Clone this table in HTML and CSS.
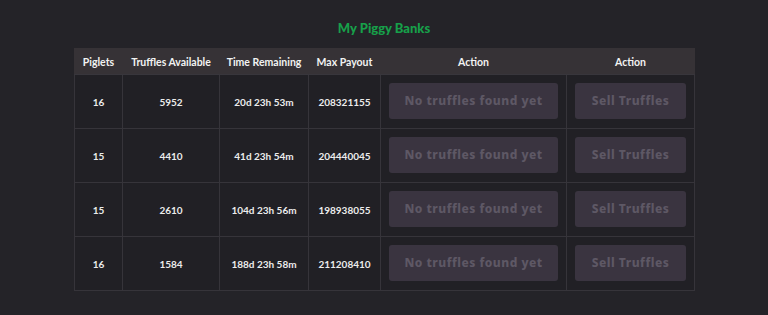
FILE: index.html
```html
<!DOCTYPE html>
<html>
<head>
<meta charset="utf-8">
<link rel="stylesheet" href="styles.css">
</head>
<body>
<h1 class="title">My Piggy Banks</h1>
<table class="banks">
  <colgroup>
    <col class="c1"><col class="c2"><col class="c3"><col class="c4"><col class="c5"><col class="c6">
  </colgroup>
  <thead>
    <tr><th>Piglets</th><th>Truffles Available</th><th>Time Remaining</th><th>Max Payout</th><th>Action</th><th>Action</th></tr>
  </thead>
  <tbody>
    <tr><td>16</td><td>5952</td><td>20d 23h 53m</td><td>208321155</td><td><button class="btn">No truffles found yet</button></td><td><button class="btn">Sell Truffles</button></td></tr>
    <tr><td>15</td><td>4410</td><td>41d 23h 54m</td><td>204440045</td><td><button class="btn">No truffles found yet</button></td><td><button class="btn">Sell Truffles</button></td></tr>
    <tr><td>15</td><td>2610</td><td>104d 23h 56m</td><td>198938055</td><td><button class="btn">No truffles found yet</button></td><td><button class="btn">Sell Truffles</button></td></tr>
    <tr><td>16</td><td>1584</td><td>188d 23h 58m</td><td>211208410</td><td><button class="btn">No truffles found yet</button></td><td><button class="btn">Sell Truffles</button></td></tr>
  </tbody>
</table>
</body>
</html>
```
FILE: styles.css
```css
html, body {
  margin: 0;
  padding: 0;
  background: #242328;
  font-family: "Lato", "Noto Sans", sans-serif;
}
.title {
  margin: 0;
  padding-top: 20px;
  height: 28px;
  box-sizing: content-box;
  text-align: center;
  font-size: 13px;
  font-weight: 900;
  color: #17a04a;
  line-height: 16px;
}
.banks {
  margin: 0 0 0 74px;
  width: 620px;
  table-layout: fixed;
  border-collapse: collapse;
  background: #212025;
}
.c1 { width: 48px; }
.c2 { width: 97px; }
.c3 { width: 89px; }
.c4 { width: 72px; }
.c5 { width: 186px; }
.c6 { width: 128px; }
.banks th {
  background: #363236;
  color: #f2f2f2;
  font-size: 10.5px;
  font-weight: 700;
  height: 25px;
  padding: 0;
  border: 1px solid #363236;
  border-bottom: 1px solid #38363c;
}
.banks td {
  border: 1px solid #36343a;
  color: #ececec;
  font-size: 10px;
  font-weight: 700;
  text-align: center;
  height: 53px;
  padding: 0 8px;
}
.btn {
  display: block;
  width: 100%;
  height: 36px;
  margin-top: -2px;
  border: none;
  border-radius: 3px;
  background: #3a3440;
  color: #5e5865;
  font-family: "Noto Sans", sans-serif;
  font-size: 12px;
  font-weight: 800;
  letter-spacing: 0.5px;
}
```
